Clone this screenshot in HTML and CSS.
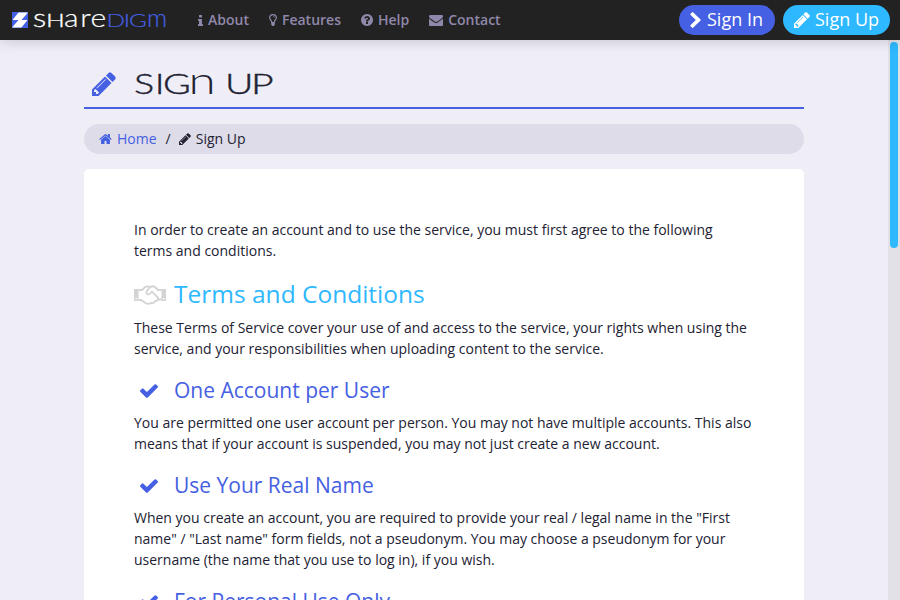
FILE: index.html
```
<!DOCTYPE html>
<html lang="en">
<head>
<meta charset="utf-8">
<title>Sharedigm - Sign Up</title>
<link rel="stylesheet" href="styles.css">
</head>
<body>
<svg class="defs" width="0" height="0">
  <symbol id="pencil" viewBox="128 128 1536 1536"><path d="M491 1536l91-91-235-235-91 91v107h128v128h107zm523-928q0-22-22-22-10 0-17 7l-542 542q-7 7-7 17 0 22 22 22 10 0 17-7l542-542q7-7 7-17zm-54-192l416 416-832 832h-416v-416zm683 96q0 53-37 90l-166 166-416-416 166-165q36-38 90-38 53 0 91 38l235 234q37 39 37 91z"/></symbol>
  <symbol id="check" viewBox="121 330 1550 1192"><path d="M1671 566q0 40-28 68l-724 724-136 136q-28 28-68 28t-68-28l-136-136-362-362q-28-28-28-68t28-68l136-136q28-28 68-28t68 28l294 295 656-657q28-28 68-28t68 28l136 136q28 28 28 68z"/></symbol>
</svg>
<header class="navbar">
  <a class="brand">
    <svg class="mark" viewBox="0 0 16 16"><path class="tile" d="M0 0h16v16H0z"/><path class="bolt" d="M6.500.5h9.500L9.500 8H.500zM6.500 8h9L9.500 15.500H0z"/></svg>
    <svg class="wordmark" viewBox="0 0 136 20"><text class="cap" transform="scale(1.350 1)" x="-.7 9" y="17">SH</text><text class="low" transform="scale(1.200 1)" x="25 38.500 47" y="17">are</text><text class="cap digm" transform="scale(1.350 1)" x="53.800 66.500 70.300" y="17">DIG</text><text class="low digm" x="113" y="17">m</text></svg>
  </a>
  <nav class="links">
    <a class="about"><svg class="icon-info" viewBox="576 128 640 1408"><path d="M1216 1344v128q0 26-19 45t-45 19h-512q-26 0-45-19t-19-45v-128q0-26 19-45t45-19h64v-384h-64q-26 0-45-19t-19-45v-128q0-26 19-45t45-19h384q26 0 45 19t19 45v576h64q26 0 45 19t19 45zm-128-1152v192q0 26-19 45t-45 19h-256q-26 0-45-19t-19-45v-192q0-26 19-45t45-19h256q26 0 45 19t19 45z"/></svg>About</a>
    <a class="features"><svg class="icon-bulb" viewBox="0 0 8 12"><path class="line" d="M2.700 8.200C2.700 6.500.7 5.700.7 3.800.7 2 2.100.6 4 .6s3.300 1.400 3.300 3.200c0 1.900-2 2.700-2 4.400"/><path class="line thin" d="M4 2.300c.9 0 1.500.5 1.500 1.200"/><path d="M2.200 8h3.600v2.700L4.700 12H3.300L2.200 10.700z"/></svg>Features</a>
    <a class="help"><svg class="icon-help" viewBox="128 128 1536 1536"><path d="M1024 1376v-192q0-14-9-23t-23-9h-192q-14 0-23 9t-9 23v192q0 14 9 23t23 9h192q14 0 23-9t9-23zm256-672q0-88-55.500-163t-138.500-116-170-41q-243 0-371 213-15 24 8 42l132 100q7 6 19 6 16 0 25-12 53-68 86-92 34-24 86-24 48 0 85.500 26t37.500 59q0 38-20 61t-68 45q-63 28-115.500 86.500t-52.500 125.500v36q0 14 9 23t23 9h192q14 0 23-9t9-23q0-19 21.500-49.500t54.500-49.500q32-18 49-28.500t46-35 44.500-48 28-60.500 12.500-81zm384 192q0 209-103 385.500t-279.500 279.500-385.500 103-385.500-103-279.500-279.500-103-385.500 103-385.500 279.500-279.500 385.500-103 385.500 103 279.500 279.500 103 385.500z"/></svg>Help</a>
    <a class="contact"><svg class="icon-mail" viewBox="0 256 1792 1408"><path d="M1792 710v794q0 66-47 113t-113 47h-1472q-66 0-113-47t-47-113v-794q44 49 101 87 362 246 497 345 57 42 92.500 65.500t94.500 48 110 24.500h2q51 0 110-24.500t94.500-48 92.500-65.500q170-123 498-345 57-39 100-87zm0-294q0 79-49 151t-122 123q-376 261-468 325-10 7-42.500 31t-54 38.500-52 32.500-57.500 27-50 9h-2q-23 0-50-9t-57.500-27-52-32.500-54-38.500-42.500-31q-91-64-262-182.500t-205-142.500q-62-42-117-115.500t-55-136.500q0-78 41.500-130t118.500-52h1472q65 0 112.500 47t47.500 113z"/></svg>Contact</a>
  </nav>
  <div class="actions">
    <a class="button sign-in"><svg class="icon-chevron" viewBox="410 194 1036 1570"><path d="M1427 1024l-742 721q-19 19-45 19t-45-19l-166-166q-19-19-19-45t19-45l531-510-531-510q-19-19-19-45t19-45l166-166q19-19 45-19t45 19l742 721q19 19 19 45t-19 45z"/></svg>Sign In</a>
    <a class="button sign-up"><svg class="icon-pencil"><use href="#pencil"/></svg>Sign Up</a>
  </div>
</header>
<main class="container">
  <h1><svg class="title-icon"><use href="#pencil"/></svg><svg class="title" viewBox="0 0 150 30"><text class="cap" transform="scale(1.350 1)" x="0 15.300 21.500" y="24">SIG</text><text class="low" transform="scale(1.300 1)" x="42" y="24">n</text><text class="cap" transform="scale(1.400 1)" x="65 83.500" y="24">UP</text></svg></h1>
  <nav class="breadcrumb">
    <a class="home"><svg class="icon-home" viewBox="89 242 1614 1294"><path d="M1472 992v480q0 26-19 45t-45 19h-384v-384h-256v384h-384q-26 0-45-19t-19-45v-480q0-1 .5-3t.5-3l575-474 575 474q1 2 1 6zm223-69l-62 74q-8 9-21 11h-3q-13 0-21-7l-692-577-692 577q-12 8-24 7-13-2-21-11l-62-74q-8-10-7-23.500t11-21.500l719-599q32-26 76-26t76 26l244 204v-195q0-14 9-23t23-9h192q14 0 23 9t9 23v408l219 182q10 8 11 21.500t-7 23.500z"/></svg>Home</a>
    <span class="slash">/</span>
    <span class="current"><svg class="icon-edit"><use href="#pencil"/></svg>Sign Up</span>
  </nav>
  <section class="card">
    <p>In order to create an account and to use the service, you must first agree to the following terms and conditions.</p>
    <h2><svg class="icon-shake" viewBox="0 0 32 20"><path d="M0 4h4.500v12H0zM27.500 4H32v12h-4.500z"/><path class="hole" d="M1.500 13h1.500v1.500H1.500zM29 13h1.500v1.500H29z"/><path class="line" d="M4.500 5H8l3-2.800c1.300-1 3-1 5 0 1.500-1 3.500-1.200 5-.2L24 5h3.500M4.500 15H7l5 3.300c2 1 3.500.8 5-.3 2 .3 3.500-.5 4.300-2 1.500 0 2.500-.8 2.900-1.500h3.300"/><path class="line" d="M16 2.200l-3.500 4.300c-1 2.200 1.500 4 3.500 2.200l2-2 5.500 5.500c.7.700.9 1.500.6 2.300"/></svg>Terms and Conditions</h2>
    <p>These Terms of Service cover your use of and access to the service, your rights when using the service, and your responsibilities when uploading content to the service.</p>
    <h3><svg class="icon-check"><use href="#check"/></svg>One Account per User</h3>
    <p>You are permitted one user account per person. You may not have multiple accounts. This also means that if your account is suspended, you may not just create a new account.</p>
    <h3><svg class="icon-check"><use href="#check"/></svg>Use Your Real Name</h3>
    <p>When you create an account, you are required to provide your real / legal name in the "First name" / "Last name" form fields, not a pseudonym. You may choose a pseudonym for your username (the name that you use to log in), if you wish.</p>
    <h3><svg class="icon-check"><use href="#check"/></svg>For Personal Use Only</h3>
  </section>
</main>
<div class="scrollbar"><div class="thumb"></div></div>
</body>
</html>
```
FILE: styles.css
```
* { box-sizing: border-box; }
body {
  display: flex;
  flex-direction: column;
  margin: 0;
  height: 600px;
  overflow: hidden;
  background: #efeef7;
  color: #222233;
  font: 14px/21px "Open Sans", sans-serif;
}
.defs { position: absolute; }
svg { fill: currentColor; flex: none; display: block; }
.navbar {
  position: relative;
  z-index: 1;
  display: flex;
  flex: none;
  align-items: center;
  height: 40px;
  padding: 0 10px 0 12px;
  background: #222222;
  box-shadow: 0 0 15px rgba(0, 0, 0, 0.2);
}
.brand { display: flex; align-items: center; gap: 6px; width: 186px; }
.mark { width: 16px; height: 16px; }
.mark .tile { fill: #4560e2; }
.mark .bolt { fill: #ffffff; }
.wordmark {
  width: 136px;
  height: 20px;
  overflow: visible;
  color: #ffffff;
  font-family: Lato, sans-serif;
  font-weight: 300;
  stroke: currentColor;
  stroke-width: 0.4;
}
.wordmark .cap { font-size: 18px; }
.wordmark .low { font-size: 25px; stroke-width: 0.2; }
.wordmark .digm { fill: #4560e2; stroke: #4560e2; stroke-width: 0.2; }
.links { display: flex; gap: 20px; color: #9088aa; font-weight: 600; line-height: 19px; padding-bottom: 1px; }
.links a { display: flex; align-items: center; }
.links svg { position: relative; top: 0.5px; }
.icon-info { width: 5px; height: 11px; margin-right: 5px; }
.icon-bulb { width: 8px; height: 12px; margin-right: 5px; }
.icon-help { width: 12px; height: 12px; margin-right: 5px; }
.icon-mail { width: 14px; height: 11px; margin-right: 5px; }
.line { fill: none; stroke: currentColor; stroke-width: 1.2; }
.thin { stroke-width: 0.7; }
.actions { display: flex; gap: 8px; margin-left: auto; }
.button {
  display: flex;
  align-items: center;
  height: 30px;
  padding: 0 0 1px 11px;
  border-radius: 15px;
  color: #ffffff;
  font-size: 18px;
  font-weight: 500;
  white-space: nowrap;
}
.button svg { position: relative; top: 0.5px; }
.sign-in { width: 96px; background: #4560e2; }
.sign-up { width: 107px; background: #2eb8ff; }
.icon-chevron { width: 11px; height: 16px; margin-right: 6px; }
.icon-pencil { width: 16px; height: 16px; margin-right: 5px; }
.container { flex: 1; min-height: 0; overflow: hidden; width: 720px; margin-left: 84px; }
h1, h2, h3, p { margin: 0; font-weight: 400; }
h1 {
  display: flex;
  align-items: center;
  height: 69px;
  padding: 19px 0 0 8px;
  border-bottom: 2px solid #4560e2;
}
.title-icon { width: 24px; height: 24px; margin-top: 1px; color: #4560e2; }
.title {
  width: 150px;
  height: 30px;
  margin: 4px 0 0 18px;
  overflow: visible;
  font-family: Lato, sans-serif;
  font-weight: 300;
  stroke: currentColor;
  stroke-width: 0.4;
}
.title .cap { font-size: 28px; }
.title .low { font-size: 38px; stroke-width: 0; }
.breadcrumb {
  display: flex;
  align-items: center;
  height: 30px;
  margin: 15px 0;
  padding: 0 0 2px 15px;
  border-radius: 15px;
  background: #dddce8;
}
.breadcrumb a, .current { display: flex; align-items: center; }
.breadcrumb svg { position: relative; top: 1px; }
.home { color: #4560e2; }
.icon-home { width: 13px; height: 10px; margin-right: 5px; }
.slash { margin: 0 8px 0 9px; }
.icon-edit { width: 12px; height: 12px; margin-right: 5px; }
.card { padding: 50px; border-radius: 5px; background: #ffffff; }
h2, h3 { display: flex; align-items: center; }
h2 { margin: 19px 0 10px; color: #2eb8ff; font-size: 24.5px; line-height: 27px; }
h3 { margin: 19px 0 10px; color: #4560e2; font-size: 21px; line-height: 24px; }
h2 svg, h3 svg { position: relative; top: 1px; }
.icon-shake { width: 32px; height: 20px; margin-right: 8px; color: #d3d3d3; }
.icon-shake .line { stroke-width: 1.8; }
.icon-shake .hole { fill: #ffffff; }
.icon-check { width: 18px; height: 14px; margin: 0 16px 0 6px; }
.scrollbar { position: absolute; top: 40px; right: 0; width: 12px; height: 560px; padding: 2px; background: #e2e1e8; }
.thumb { height: 206px; border-radius: 4px; background: #2eb8ff; }
```
